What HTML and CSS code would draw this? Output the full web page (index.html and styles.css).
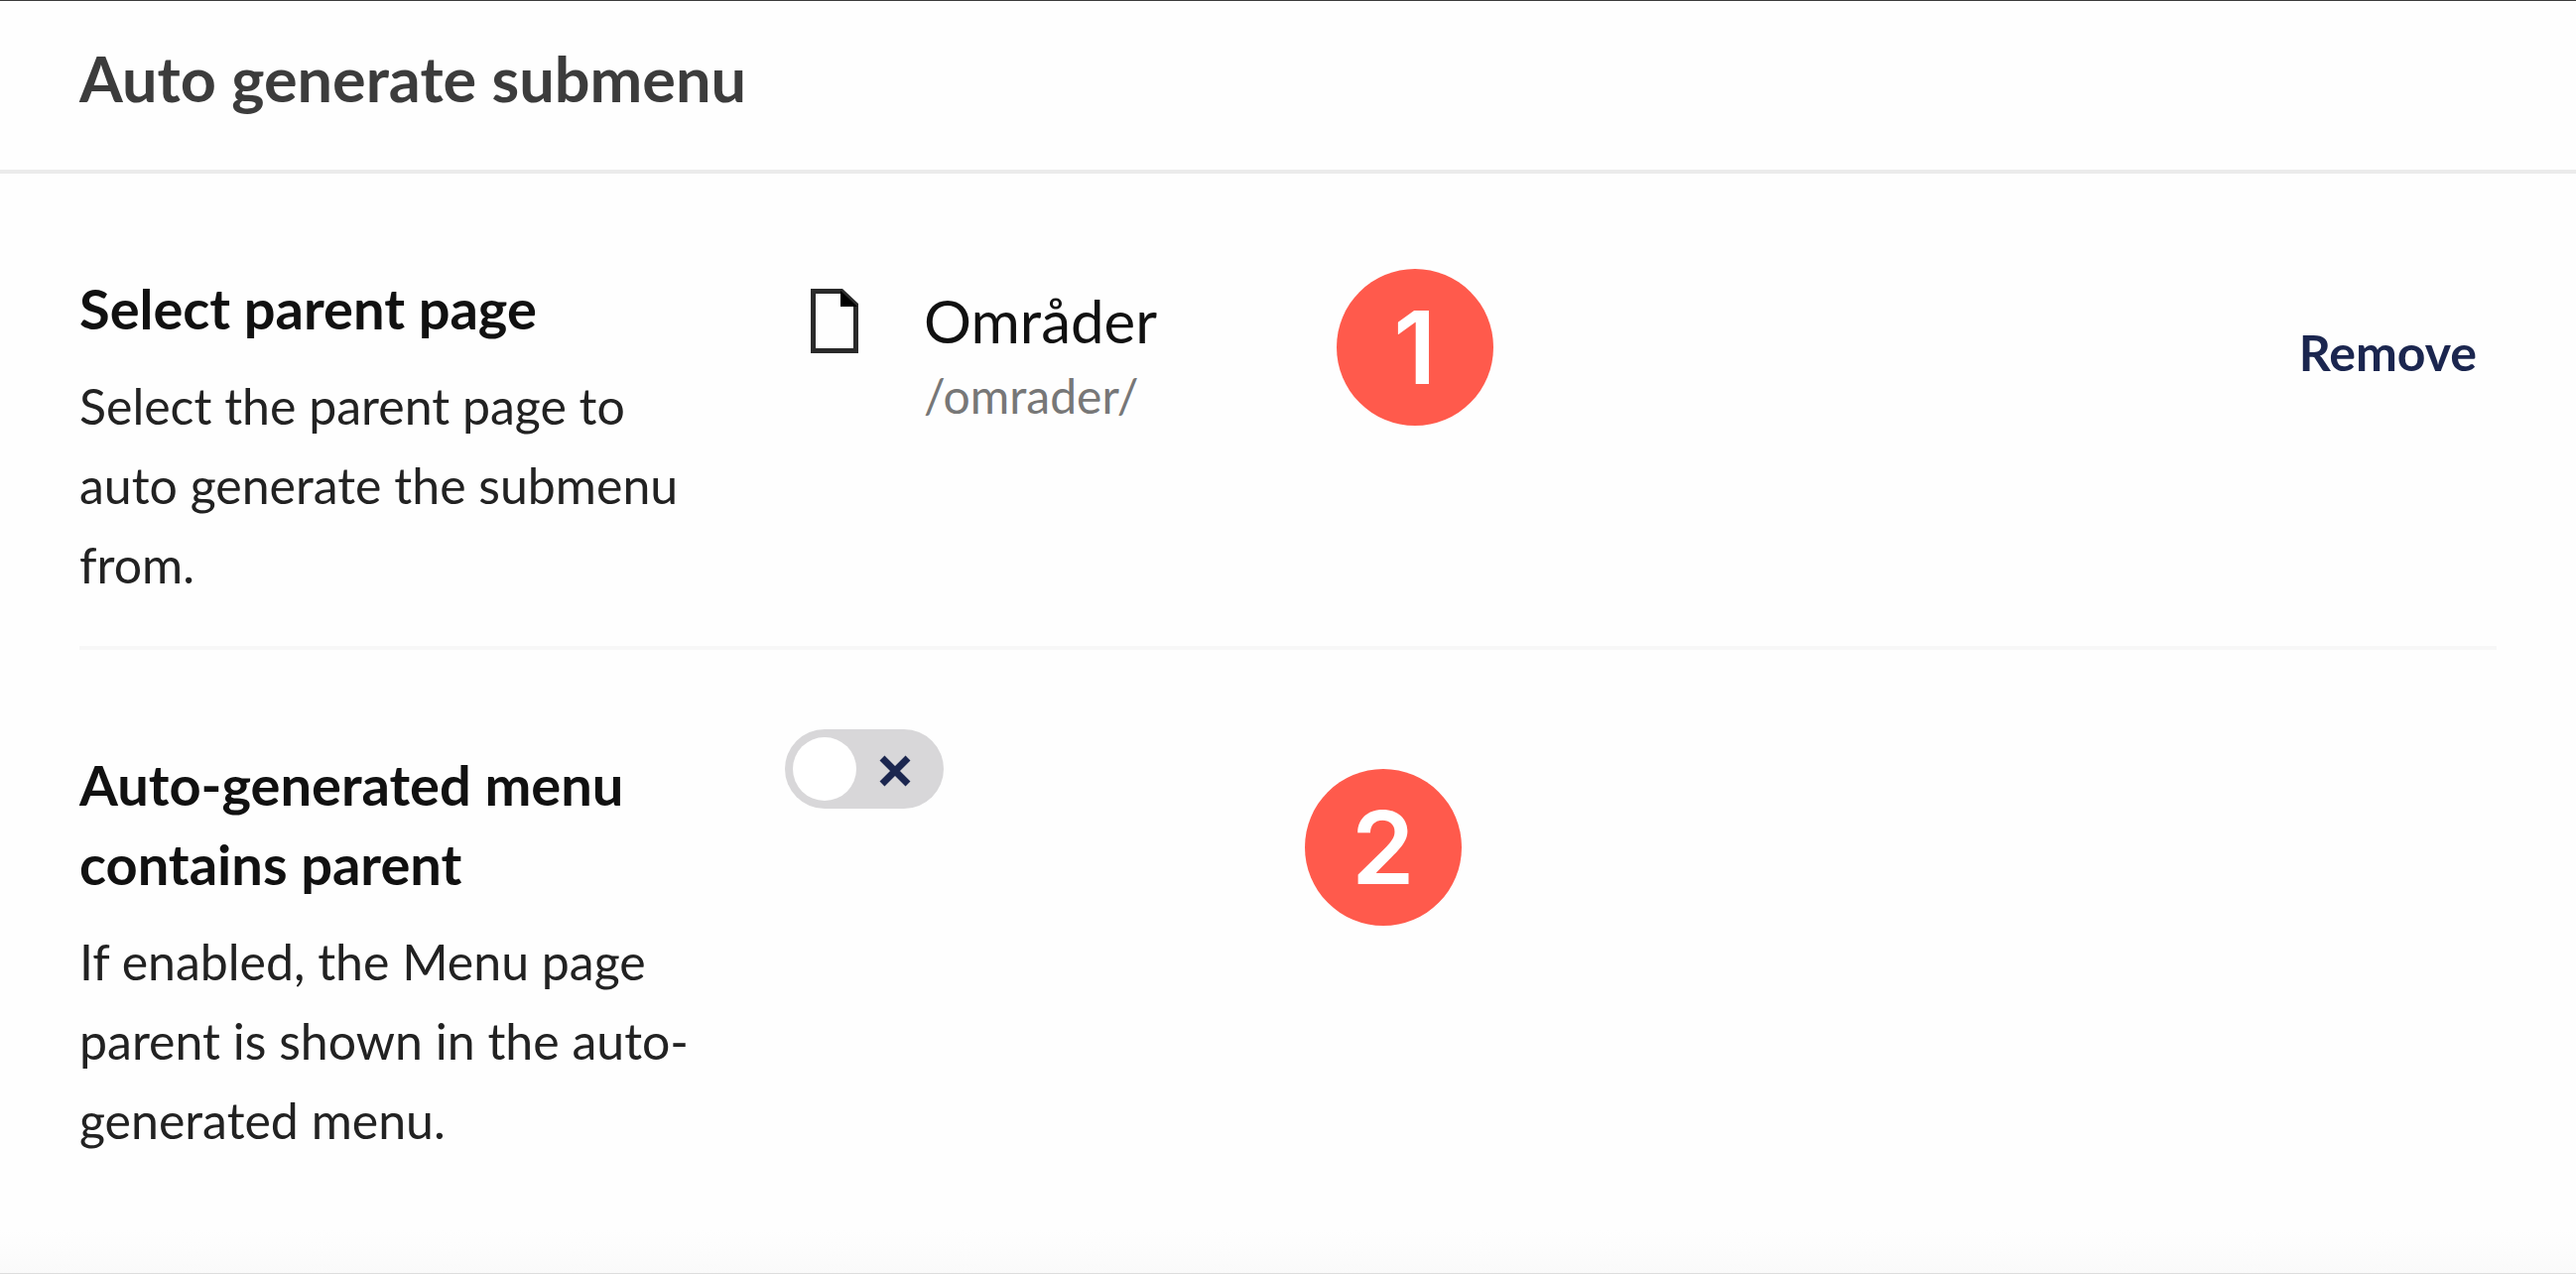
FILE: index.html
```html
<!DOCTYPE html>
<html lang="en">
<head>
  <meta charset="UTF-8">
  <meta name="viewport" content="width=device-width, initial-scale=1.0">
  <title>Auto generate submenu</title>
  <link rel="stylesheet" href="styles.css">
</head>
<body>
  <section class="panel">
    <header class="panel-header">
      <h1 class="panel-title">Auto generate submenu</h1>
    </header>

    <div class="panel-body">
      <div class="property">
        <div class="property-info">
          <h2 class="property-label">Select parent page</h2>
          <p class="property-description">Select the parent page to auto generate the submenu from.</p>
        </div>
        <div class="property-editor">
          <div class="node">
            <svg class="node-icon" viewBox="0 0 48 66" aria-hidden="true">
              <path d="M2.500 2.500H31L45.500 16V62.500H2.500Z" fill="none" stroke="#2a2a2a" stroke-width="5"/>
              <path d="M30 2V18H47Z" fill="#000"/>
            </svg>
            <div class="node-text">
              <div class="node-name">Områder</div>
              <div class="node-path">/omrader/</div>
            </div>
            <button type="button" class="node-remove">Remove</button>
          </div>
        </div>
        <span class="badge badge-parent">1</span>
      </div>

      <div class="property">
        <div class="property-info">
          <h2 class="property-label"><label for="contains-parent">Auto-generated menu contains parent</label></h2>
          <p class="property-description">If enabled, the Menu page parent is shown in the auto-generated menu.</p>
        </div>
        <div class="property-editor">
          <div class="toggle">
            <input type="checkbox" id="contains-parent" class="toggle-input">
            <svg class="toggle-icon" viewBox="0 0 32 32" aria-hidden="true">
              <path d="M3 3L29 29M29 3L3 29" stroke="#1b264f" stroke-width="7"/>
            </svg>
          </div>
        </div>
        <span class="badge badge-toggle">2</span>
      </div>
    </div>

    <footer class="panel-footer"></footer>
  </section>
</body>
</html>
```
FILE: styles.css
```css
* {
  box-sizing: border-box;
}

body {
  margin: 0;
  background: #fefefe;
  color: #111;
  font-family: Lato, "Liberation Sans", sans-serif;
}

h1, h2, p {
  margin: 0;
}

.panel {
  display: flex;
  flex-direction: column;
  min-height: 100vh;
  border-top: 1px solid #3c3c3c;
}

.panel-header {
  padding: 38px 80px 52px;
  border-bottom: 4px solid #ebebeb;
}

.panel-title {
  color: #3c3c3c;
  font-size: 63px;
  font-weight: 700;
  line-height: 80px;
}

.panel-body {
  padding: 0 80px;
}

.property {
  position: relative;
  display: grid;
  grid-template-columns: 632px 1fr;
  column-gap: 79px;
  padding: 96px 0 42px;
}

.property + .property {
  border-top: 4px solid #f7f7f7;
}

.property-label {
  margin-bottom: 18px;
  font-size: 56px;
  font-weight: 700;
  line-height: 80px;
}

.property-description {
  color: #222;
  font-size: 50px;
  line-height: 80px;
}

.node {
  display: flex;
  align-items: flex-start;
  padding: 16px 20px 0 26px;
}

.node-icon {
  width: 48px;
  height: 66px;
  margin-top: 4px;
}

.node-text {
  flex: 1;
  padding-left: 66px;
}

.node-name {
  font-size: 60px;
  line-height: 72px;
}

.node-path {
  color: #777;
  font-size: 48px;
  line-height: 80px;
}

.node-remove {
  margin-top: 36px;
  padding: 0;
  border: 0;
  background: none;
  color: #1b264f;
  font-family: inherit;
  font-size: 50px;
  font-weight: 700;
  line-height: 64px;
  cursor: pointer;
}

.toggle {
  position: relative;
  width: 160px;
  height: 80px;
  margin-top: -16px;
}

.toggle-input {
  display: block;
  width: 160px;
  height: 80px;
  margin: 0;
  border-radius: 40px;
  background: #d8d7d9;
  appearance: none;
  cursor: pointer;
}

.toggle-input::before {
  content: "";
  position: absolute;
  top: 8px;
  left: 8px;
  width: 64px;
  height: 64px;
  border-radius: 50%;
  background: #fff;
}

.toggle-icon {
  position: absolute;
  top: 26px;
  right: 33px;
  width: 32px;
  height: 32px;
  pointer-events: none;
}

/* numbered callouts lying over the rows */
.badge {
  position: absolute;
  top: 96px;
  left: 52%;
  display: flex;
  align-items: center;
  justify-content: center;
  width: 158px;
  height: 158px;
  border-radius: 50%;
  background: #ff5a4c;
  color: #fff;
  font-family: Inter, "Liberation Sans", sans-serif;
  font-size: 102px;
  font-weight: 600;
  line-height: 1;
}

.badge-toggle {
  top: 120px;
  left: calc(52% - 32px);
}

.panel-footer {
  height: 44px;
  margin-top: auto;
  border-bottom: 1px solid #ddd;
  background: linear-gradient(#fefefe, #fafafa);
}

.panel-footer::before {
  content: "";
  display: block;
  width: 102px;
  height: 100%;
  border-bottom: 1px solid #ddd;
}
```
